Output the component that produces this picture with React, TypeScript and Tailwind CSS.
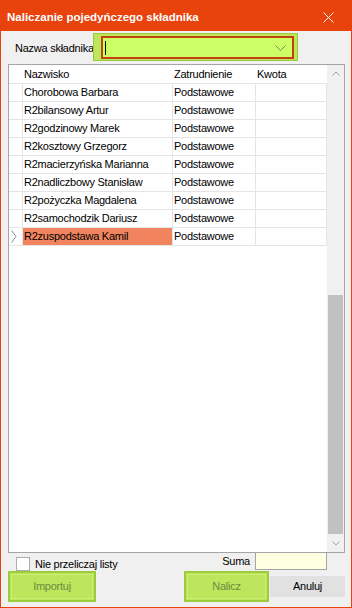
import React from "react";

const rows = [
  "Chorobowa Barbara",
  "R2bilansowy Artur",
  "R2godzinowy Marek",
  "R2kosztowy Grzegorz",
  "R2macierzyńska Marianna",
  "R2nadliczbowy Stanisław",
  "R2pożyczka Magdalena",
  "R2samochodzik Dariusz",
  "R2zuspodstawa Kamil",
];

const font = { fontFamily: '"Liberation Sans", Arial, sans-serif' };

const App = () => {
  return (
    <div
      className="w-[352px] h-[608px] bg-[#e8420d] flex flex-col text-[11px] tracking-[-0.25px] leading-[13px] text-black overflow-hidden"
      style={font}
    >
      {/* Title bar */}
      <div className="h-[31px] flex items-center justify-between pl-[7px] pr-[18px] shrink-0">
        <span className="text-white font-bold text-[11.5px] tracking-normal pt-[3px] whitespace-nowrap">
          Naliczanie pojedyńczego składnika
        </span>
        <svg width="11" height="11" viewBox="0 0 11 11" className="mt-[3px]">
          <path d="M0.5 0.5 L10.5 10.5 M10.5 0.5 L0.5 10.5" stroke="#fff" strokeWidth="1" />
        </svg>
      </div>

      {/* Body */}
      <div className="mx-[1px] mb-[1px] h-[576px] bg-[#f0f0f0] flex flex-col pt-[2px]">
        {/* Combobox row */}
        <div className="flex items-center h-[28px]">
          <span className="pl-[14px] w-[92px] shrink-0 whitespace-nowrap pt-[2px]">Nazwa składnika</span>
          <div className="w-[205px] h-[28px] shrink-0 bg-[#bde65c] border border-[#98c93e] pl-[7px] pr-[3px] pt-[2px] pb-[1px]">
            <div className="h-full bg-[#ccff66] border-2 border-[#c2410c] flex items-center justify-between pl-[2px] pr-[6px]">
              <div className="w-[1px] h-[14px] bg-black" />
              <svg width="11" height="6" viewBox="0 0 11 6">
                <path d="M0.5 0.5 L5.5 5.5 L10.5 0.5" fill="none" stroke="#7a8a5a" strokeWidth="1" />
              </svg>
            </div>
          </div>
        </div>

        {/* Grid */}
        <div className="mt-[3px] ml-[7px] w-[337px] h-[489px] border border-[#a5a5a5] bg-white flex">
          <div className="w-[318px] flex flex-col">
            <div className="h-[19px] flex items-center border-b border-[#e5e5e5]">
              <div className="w-[14px]" />
              <div className="w-[150px] pl-[1px]">Nazwisko</div>
              <div className="w-[83px] pl-[1px]">Zatrudnienie</div>
              <div className="w-[71px] pl-[1px]">Kwota</div>
            </div>
            {rows.map((name, i) => {
              const sel = i === rows.length - 1;
              return (
                <div key={name} className="h-[18px] flex border-b border-[#e5e5e5]">
                  <div className="w-[14px] border-r border-[#e5e5e5] flex items-center pl-[2px]">
                    {sel && (
                      <svg width="6" height="13" viewBox="0 0 6 13">
                        <path d="M0.5 0.5 L5 6.5 L0.5 12.5" fill="none" stroke="#8a8a8a" strokeWidth="1" />
                      </svg>
                    )}
                  </div>
                  <div
                    className={
                      "w-[150px] border-r border-[#e5e5e5] flex items-center pl-[1px] whitespace-nowrap " +
                      (sel ? "bg-[#f1845f]" : "")
                    }
                  >
                    {name}
                  </div>
                  <div className="w-[83px] border-r border-[#e5e5e5] flex items-center pl-[1px]">Podstawowe</div>
                  <div className="w-[71px] border-r border-[#e5e5e5]" />
                </div>
              );
            })}
          </div>

          {/* Scrollbar */}
          <div className="w-[17px] bg-[#f0f0f0] flex flex-col">
            <div className="h-[17px] flex items-center justify-center">
              <svg width="8" height="5" viewBox="0 0 8 5">
                <path d="M0.5 4.5 L4 1 L7.5 4.5" fill="none" stroke="#a3a3a3" strokeWidth="1" />
              </svg>
            </div>
            <div className="h-[213px]" />
            <div className="h-[239px] mx-[1px] bg-[#c1c1c1]" />
            <div className="flex-1 flex items-center justify-center">
              <svg width="8" height="5" viewBox="0 0 8 5">
                <path d="M0.5 0.5 L4 4 L7.5 0.5" fill="none" stroke="#a3a3a3" strokeWidth="1" />
              </svg>
            </div>
          </div>
        </div>

        {/* Checkbox + Suma row */}
        <div className="h-[18px] flex items-start">
          <div className="ml-[15px] mt-[4px] w-[14px] h-[14px] shrink-0 border border-[#adadad] bg-white" />
          <span className="ml-[5px] mt-[5px] whitespace-nowrap">Nie przeliczaj listy</span>
          <span className="ml-auto mr-[5px] mt-[2px]">Suma</span>
          <div className="w-[72px] h-[17px] shrink-0 bg-[#ffffe1] border border-t-0 border-[#a5a5a5] mr-[24px]" />
        </div>

        {/* Buttons */}
        <div className="h-[31px] flex items-center">
          <div className="ml-[7px] w-[88px] h-[31px] border-2 border-[#9ccc3c] bg-[#bde65c] p-[1px]">
            <div className="w-full h-full border border-[#c9ee74] flex items-center justify-center text-[#6e8a3e]">
              Importuj
            </div>
          </div>
          <div className="ml-auto w-[85px] h-[31px] border-2 border-[#9ccc3c] bg-[#bde65c] p-[1px]">
            <div className="w-full h-full border border-[#c9ee74] flex items-center justify-center text-[#6e8a3e]">
              Nalicz
            </div>
          </div>
          <div className="ml-[1px] mr-[6px] w-[75px] h-[21px] bg-[#e1e1e1] flex items-center justify-center">
            Anuluj
          </div>
        </div>
      </div>
    </div>
  );
};

export default App;
